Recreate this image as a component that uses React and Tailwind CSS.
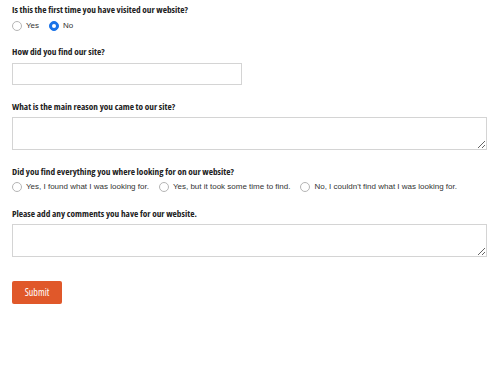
import { useState } from 'react';

const LABEL = "block h-[10px] text-[9.3px] font-bold text-[#222] leading-[10px] [font-family:'Open_Sans',sans-serif] font-stretch-condensed";

function Radio({ name, label, checked, onChange }) {
  return (
    <label className="flex items-center gap-[4px] cursor-pointer">
      <span
        className={
          'w-[10px] h-[10px] rounded-full border flex items-center justify-center ' +
          (checked ? 'bg-[#1a73e8] border-[#1a73e8]' : 'bg-white border-[#b5b5b5]')
        }
      >
        {checked && <span className="w-[4px] h-[4px] rounded-full bg-white" />}
      </span>
      <input type="radio" name={name} checked={checked} onChange={onChange} className="hidden" />
      <span className="text-[8px] leading-[10px] text-[#333] [font-family:'Liberation_Sans',Arial,sans-serif]">{label}</span>
    </label>
  );
}

export default function App() {
  const [first, setFirst] = useState('no');
  const [found, setFound] = useState('');

  return (
    <div className="w-[500px] h-[375px] bg-white pl-[12px] pr-[13px] pt-[5px]">
      <div className="mb-[16px]">
        <div className={LABEL}>Is this the first time you have visited our website?</div>
        <div className="flex items-center gap-[10px] h-[10px] mt-[6px]">
          <Radio name="first" label="Yes" checked={first === 'yes'} onChange={() => setFirst('yes')} />
          <Radio name="first" label="No" checked={first === 'no'} onChange={() => setFirst('no')} />
        </div>
      </div>

      <div className="mb-[17px]">
        <div className={LABEL}>How did you find our site?</div>
        <input type="text" className="block mt-[6px] w-[230px] h-[22px] border border-[#d4d4d4] outline-none px-1 text-xs" />
      </div>

      <div className="mb-[17px]">
        <div className={LABEL}>What is the main reason you came to our site?</div>
        <textarea className="block mt-[5px] w-full h-[33px] border border-[#d4d4d4] outline-none px-1 text-xs" />
      </div>

      <div className="mb-[17px]">
        <div className={LABEL}>Did you find everything you where looking for on our website?</div>
        <div className="flex items-center gap-[10px] h-[10px] mt-[5px]">
          <Radio name="found" label="Yes, I found what I was looking for." checked={found === 'a'} onChange={() => setFound('a')} />
          <Radio name="found" label="Yes, but it took some time to find." checked={found === 'b'} onChange={() => setFound('b')} />
          <Radio name="found" label="No, I couldn't find what I was looking for." checked={found === 'c'} onChange={() => setFound('c')} />
        </div>
      </div>

      <div className="mb-[24px]">
        <div className={LABEL}>Please add any comments you have for our website.</div>
        <textarea className="block mt-[5px] w-full h-[33px] border border-[#d4d4d4] outline-none px-1 text-xs" />
      </div>

      <button className="block w-[50px] h-[23px] bg-[#e0582a] rounded-[2px] text-white text-[10px] [font-family:'Open_Sans',sans-serif] font-stretch-condensed">
        Submit
      </button>
    </div>
  );
}
